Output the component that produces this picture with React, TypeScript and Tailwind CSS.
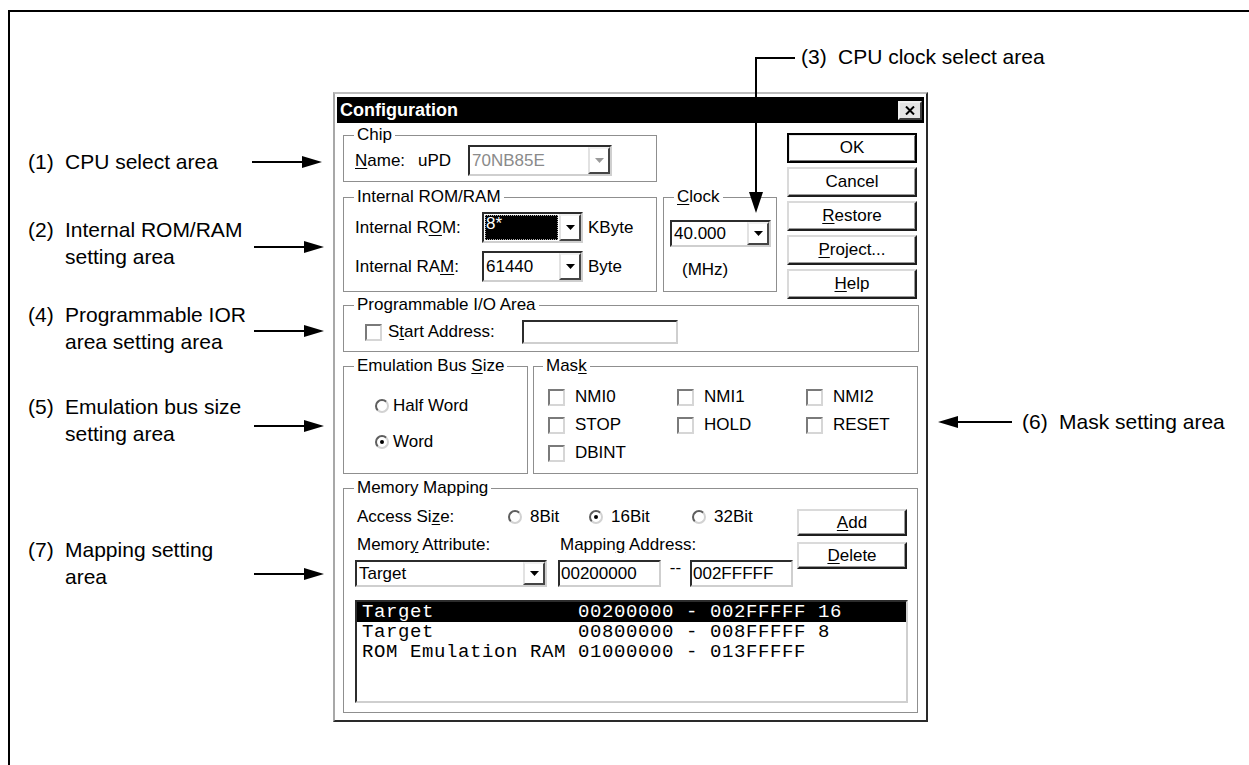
import type { ReactNode } from "react";

function U({ children }: { children: ReactNode }) {
  return <span className="underline underline-offset-[2px]">{children}</span>;
}

function Group({
  title,
  className,
  legendClass,
  children,
}: {
  title: ReactNode;
  className: string;
  legendClass: string;
  children?: ReactNode;
}) {
  return (
    <fieldset className={`min-w-0 shrink-0 overflow-hidden border border-[#8f8f8f] ${className}`}>
      <legend className={`px-[3px] text-[17px] leading-[20px] ${legendClass}`}>{title}</legend>
      {children}
    </fieldset>
  );
}

function Arrow({ disabled }: { disabled?: boolean }) {
  return (
    <svg width="9" height="5" viewBox="0 0 9 5">
      <polygon points="0,0 9,0 4.5,5" fill={disabled ? "#9a9a9a" : "#000"} />
    </svg>
  );
}

function Combo({
  className,
  value,
  selected,
  disabled,
}: {
  className: string;
  value: string;
  selected?: boolean;
  disabled?: boolean;
}) {
  return (
    <div
      className={`flex shrink-0 border-2 border-t-[#2c2c2c] border-l-[#2c2c2c] border-r-[#cfcfcf] border-b-[#cfcfcf] bg-white ${className}`}
    >
      <div className="flex flex-1 items-center p-[1px]">
        {selected ? (
          <span className="flex h-full w-full items-start bg-black pl-[1px] leading-[18px] text-white outline-1 -outline-offset-1 outline-dotted outline-[#b0b0b0]">
            {value}
          </span>
        ) : (
          <span className={disabled ? "pl-[1px] text-[#8a8a8a]" : "pl-[1px]"}>{value}</span>
        )}
      </div>
      <div className="flex w-[22px] items-center justify-center border-2 border-t-[#f0f0f0] border-l-[#e2e2e2] border-r-[#454545] border-b-[#454545] bg-white">
        <Arrow disabled={disabled} />
      </div>
    </div>
  );
}

function Field({ className, value }: { className: string; value?: string }) {
  return (
    <div
      className={`flex shrink-0 items-center border-2 border-t-[#2c2c2c] border-l-[#2c2c2c] border-r-[#cfcfcf] border-b-[#cfcfcf] bg-white pl-[1px] ${className}`}
    >
      {value}
    </div>
  );
}

function Btn({ children, def, className }: { children: ReactNode; def?: boolean; className: string }) {
  return (
    <div
      className={`flex shrink-0 items-center justify-center bg-white text-[17px] ${
        def
          ? "border-2 border-black shadow-[inset_1px_1px_0_#e6e6e6,inset_-1px_-1px_0_#7a7a7a]"
          : "border-2 border-t-[#dadada] border-l-[#dadada] border-r-[#1e1e1e] border-b-[#1e1e1e] shadow-[inset_-1px_-1px_0_#9a9a9a]"
      } ${className}`}
    >
      {children}
    </div>
  );
}

function Check({ className = "" }: { className?: string }) {
  return (
    <span
      className={`block h-[17px] w-[17px] shrink-0 border-2 border-t-[#7a7a7a] border-l-[#7a7a7a] border-r-[#d6d6d6] border-b-[#d6d6d6] bg-white ${className}`}
    />
  );
}

function Radio({ on }: { on?: boolean }) {
  return (
    <span className="inline-flex h-[14px] w-[14px] shrink-0 items-center justify-center rounded-full border-2 border-t-[#5e5e5e] border-l-[#5e5e5e] border-r-[#d2d2d2] border-b-[#d2d2d2] bg-white">
      {on && <span className="h-[4px] w-[4px] rounded-full bg-black" />}
    </span>
  );
}

function Callout({ num, lines, className }: { num: string; lines: string[]; className: string }) {
  return (
    <div className={`absolute flex text-[21px] leading-[27px] text-black ${className}`}>
      <span className="w-[37px]">{num}</span>
      <div>
        {lines.map((l) => (
          <div key={l} className="whitespace-nowrap">
            {l}
          </div>
        ))}
      </div>
    </div>
  );
}

const rows = [
  { text: "Target            00200000 - 002FFFFF 16", sel: true },
  { text: "Target            00800000 - 008FFFFF 8", sel: false },
  { text: "ROM Emulation RAM 01000000 - 013FFFFF", sel: false },
];

export default function App() {
  return (
    <div className="relative h-[765px] w-[1249px] overflow-hidden bg-white pl-[8px] pt-[10px] font-['Liberation_Sans',Arial,sans-serif] text-black">
      {/* figure frame */}
      <div className="h-[780px] w-[1260px] border-l-2 border-t-2 border-black">
        {/* Configuration dialog */}
        <div className="ml-[323px] mt-[80px] flex h-[630px] w-[595px] flex-col border-2 border-t-[#bdbdbd] border-l-[#a8a8a8] border-r-[#2a2a2a] border-b-[#2a2a2a] bg-white px-[2px] pb-[2px] pt-[3px]">
          {/* Title bar */}
          <div className="flex h-[26px] shrink-0 items-center justify-between bg-black pl-[3px] pr-[2px]">
            <span className="text-[18px] font-bold leading-none text-white">Configuration</span>
            <div className="flex h-[19px] w-[24px] items-center justify-center border-2 border-t-[#f0f0f0] border-l-[#f0f0f0] border-r-[#3a3a3a] border-b-[#3a3a3a] bg-[#e4e4e4]">
              <svg width="10" height="9" viewBox="0 0 10 9">
                <path d="M1 0.5 L9 8.5 M9 0.5 L1 8.5" stroke="#000" strokeWidth="2" />
              </svg>
            </div>
          </div>

          {/* Body */}
          <div className="flex flex-col pl-[6px] text-[17px]">
            {/* top section */}
            <div className="flex h-[172px] gap-[10px]">
              <div className="flex w-[434px] flex-col">
                <Group title="Chip" className="mt-[2px] h-[57px] w-[314px]" legendClass="ml-[10px]">
                  <div className="flex h-[31px] items-center">
                    <span className="ml-[11px] w-[63px]">
                      <U>N</U>ame:
                    </span>
                    <span className="w-[50px]">uPD</span>
                    <Combo className="h-[31px] w-[144px]" value="70NB85E" disabled />
                  </div>
                </Group>
                <div className="mt-[5px] flex gap-[6px]">
                  <Group title="Internal ROM/RAM" className="h-[105px] w-[314px]" legendClass="ml-[10px]">
                    <div className="mt-[5px] flex flex-col gap-[8px]">
                      <div className="flex h-[31px] items-center">
                        <span className="ml-[11px] w-[127px]">
                          Internal R<U>O</U>M:
                        </span>
                        <Combo className="h-[31px] w-[101px]" value="8*" selected />
                        <span className="ml-[5px]">KByte</span>
                      </div>
                      <div className="flex h-[31px] items-center">
                        <span className="ml-[11px] w-[127px]">
                          Internal RA<U>M</U>:
                        </span>
                        <Combo className="h-[31px] w-[101px]" value="61440" />
                        <span className="ml-[5px]">Byte</span>
                      </div>
                    </div>
                  </Group>
                  <Group
                    title={
                      <>
                        <U>C</U>lock
                      </>
                    }
                    className="h-[105px] w-[114px]"
                    legendClass="ml-[10px]"
                  >
                    <Combo className="ml-[6px] mt-[13px] h-[27px] w-[101px]" value="40.000" />
                    <div className="ml-[18px] mt-[13px] leading-[20px]">(MHz)</div>
                  </Group>
                </div>
              </div>
              <div className="mt-[10px] flex w-[130px] flex-col gap-[4px]">
                <Btn def className="h-[30px]">
                  OK
                </Btn>
                <Btn className="h-[30px]">Cancel</Btn>
                <Btn className="h-[30px]">
                  <span>
                    <U>R</U>estore
                  </span>
                </Btn>
                <Btn className="h-[30px]">
                  <span>
                    <U>P</U>roject...
                  </span>
                </Btn>
                <Btn className="h-[30px]">
                  <span>
                    <U>H</U>elp
                  </span>
                </Btn>
              </div>
            </div>

            {/* Programmable I/O */}
            <Group title="Programmable I/O Area" className="h-[57px] w-[576px]" legendClass="ml-[10px]">
              <div className="mt-[5px] flex h-[24px] items-center">
                <Check className="ml-[21px]" />
                <span className="ml-[6px] w-[134px]">
                  S<U>t</U>art Address:
                </span>
                <Field className="h-[24px] w-[156px]" />
              </div>
            </Group>

            {/* Bus size + Mask */}
            <div className="mt-[4px] flex gap-[5px]">
              <Group
                title={
                  <>
                    Emulation Bus <U>S</U>ize
                  </>
                }
                className="h-[118px] w-[185px]"
                legendClass="ml-[10px]"
              >
                <div className="ml-[31px] mt-[20px] flex flex-col gap-[16px]">
                  <div className="flex h-[20px] items-center gap-[4px]">
                    <Radio />
                    <span>Half Word</span>
                  </div>
                  <div className="flex h-[20px] items-center gap-[4px]">
                    <Radio on />
                    <span>Word</span>
                  </div>
                </div>
              </Group>
              <Group
                title={
                  <>
                    Mas<U>k</U>
                  </>
                }
                className="h-[118px] w-[385px]"
                legendClass="ml-[9px]"
              >
                <div className="ml-[14px] mt-[11px] grid grid-cols-[129px_129px_100px] gap-y-[8px]">
                  {["NMI0", "NMI1", "NMI2", "STOP", "HOLD", "RESET", "DBINT"].map((m) => (
                    <div key={m} className="flex h-[20px] items-center gap-[10px]">
                      <Check />
                      <span>{m}</span>
                    </div>
                  ))}
                </div>
              </Group>
            </div>

            {/* Memory Mapping */}
            <Group title="Memory Mapping" className="mt-[4px] h-[235px] w-[575px]" legendClass="ml-[10px]">
              <div className="flex">
                <div className="ml-[11px] flex w-[442px] flex-col">
                  <div className="mt-[7px] flex h-[24px] items-center">
                    <span className="ml-[2px] w-[151px]">
                      Access Si<U>z</U>e:
                    </span>
                    <div className="flex w-[81px] items-center gap-[8px]">
                      <Radio />
                      <span>8Bit</span>
                    </div>
                    <div className="flex w-[103px] items-center gap-[8px]">
                      <Radio on />
                      <span>16Bit</span>
                    </div>
                    <div className="flex items-center gap-[8px]">
                      <Radio />
                      <span>32Bit</span>
                    </div>
                  </div>
                  <div className="mt-[5px] flex h-[22px] items-center">
                    <span className="ml-[2px] w-[201px]">
                      Memor<U>y</U> Attribute:
                    </span>
                    <span className="ml-[2px]">
                      Mappin<U>g</U> Address:
                    </span>
                  </div>
                  <div className="mt-[4px] flex h-[27px] items-center">
                    <Combo className="h-[27px] w-[192px]" value="Target" />
                    <Field className="ml-[11px] h-[27px] w-[103px]" value="00200000" />
                    <span className="w-[29px] self-start pt-[1px] text-center leading-[14px]">--</span>
                    <Field className="h-[27px] w-[103px]" value="002FFFFF" />
                  </div>
                </div>
                <div className="mt-[11px] flex flex-col gap-[6px]">
                  <Btn className="h-[27px] w-[110px]">
                    <span>
                      <U>A</U>dd
                    </span>
                  </Btn>
                  <Btn className="h-[27px] w-[110px]">
                    <span>
                      <U>D</U>elete
                    </span>
                  </Btn>
                </div>
              </div>
              <div className="ml-[11px] mt-[13px] h-[103px] w-[553px] border-2 border-t-[#2c2c2c] border-l-[#2c2c2c] border-r-[#cfcfcf] border-b-[#cfcfcf] bg-white font-['Liberation_Mono','Courier_New',monospace] text-[19px]">
                {rows.map((r) => (
                  <div
                    key={r.text}
                    className={
                      r.sel
                        ? "h-[20px] whitespace-pre bg-black pl-[5px] leading-[20px] tracking-[0.6px] text-white"
                        : "h-[20px] whitespace-pre pl-[5px] leading-[20px] tracking-[0.6px]"
                    }
                  >
                    {r.text}
                  </div>
                ))}
              </div>
            </Group>
          </div>
        </div>
      </div>

      {/* callouts */}
      <Callout num="(1)" lines={["CPU select area"]} className="left-[28px] top-[148px]" />
      <Callout num="(2)" lines={["Internal ROM/RAM", "setting area"]} className="left-[28px] top-[216px]" />
      <Callout num="(4)" lines={["Programmable IOR", "area setting area"]} className="left-[28px] top-[301px]" />
      <Callout num="(5)" lines={["Emulation bus size", "setting area"]} className="left-[28px] top-[393px]" />
      <Callout num="(7)" lines={["Mapping setting", "area"]} className="left-[28px] top-[536px]" />
      <Callout num="(3)" lines={["CPU clock select area"]} className="left-[801px] top-[43px]" />
      <Callout num="(6)" lines={["Mask setting area"]} className="left-[1022px] top-[408px]" />

      <svg className="pointer-events-none absolute left-0 top-0" width="1249" height="765" viewBox="0 0 1249 765">
        <g stroke="#000" strokeWidth="2" fill="none">
          <line x1="252" y1="162" x2="304" y2="162" />
          <line x1="254" y1="247" x2="306" y2="247" />
          <line x1="254" y1="331" x2="306" y2="331" />
          <line x1="254" y1="426" x2="306" y2="426" />
          <line x1="254" y1="574" x2="306" y2="574" />
          <line x1="956" y1="422" x2="1012" y2="422" />
          <polyline points="795,58 756,58 756,194" />
        </g>
        <g fill="#000">
          <polygon points="302,156 322,162 302,168" />
          <polygon points="304,241 324,247 304,253" />
          <polygon points="304,325 324,331 304,337" />
          <polygon points="304,420 324,426 304,432" />
          <polygon points="304,568 324,574 304,580" />
          <polygon points="958,416 938,422 958,428" />
          <polygon points="749,192 763,192 756,213" />
        </g>
      </svg>
    </div>
  );
}
